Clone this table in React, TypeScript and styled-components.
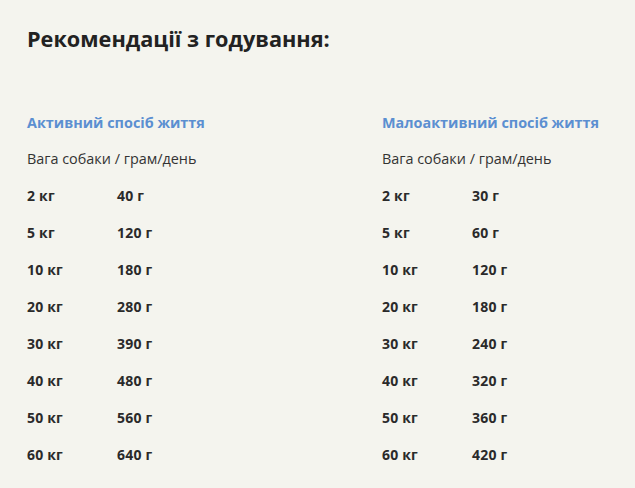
import React from "react";
import styled, { createGlobalStyle } from "styled-components";

const Global = createGlobalStyle`
  html, body { margin: 0; padding: 0; background: #f4f4ee; }
  body { font-family: "Open Sans", "Liberation Sans", sans-serif; color: #2a2a2a; }
`;

const Page = styled.div`
  padding: 25px 0 0 27px;
  width: 635px;
  box-sizing: border-box;
`;

const Title = styled.h2`
  margin: 0;
  font-size: 21.7px;
  font-weight: 700;
  line-height: 28px;
  color: #222;
`;

const Columns = styled.div`
  display: grid;
  grid-template-columns: 355px 1fr;
  margin-top: 60px;
`;

const Column = styled.div`
  display: flex;
  flex-direction: column;
`;

const Heading = styled.div`
  font-size: 14.4px;
  font-weight: 700;
  line-height: 20px;
  color: #5b8fd1;
`;

const Sub = styled.div`
  font-size: 14.4px;
  font-weight: 400;
  line-height: 20px;
  margin-top: 16px;
  color: #333;
`;

const Rows = styled.div`
  display: flex;
  flex-direction: column;
  gap: 17px;
  margin-top: 17px;
`;

const Row = styled.div`
  display: grid;
  grid-template-columns: 90px 1fr;
  font-size: 14px;
  font-weight: 700;
  line-height: 20px;
  letter-spacing: 0.2px;
  color: #2a2a2a;
`;

type Item = [string, string];

const active: Item[] = [
  ["2 кг", "40 г"],
  ["5 кг", "120 г"],
  ["10 кг", "180 г"],
  ["20 кг", "280 г"],
  ["30 кг", "390 г"],
  ["40 кг", "480 г"],
  ["50 кг", "560 г"],
  ["60 кг", "640 г"],
];

const low: Item[] = [
  ["2 кг", "30 г"],
  ["5 кг", "60 г"],
  ["10 кг", "120 г"],
  ["20 кг", "180 г"],
  ["30 кг", "240 г"],
  ["40 кг", "320 г"],
  ["50 кг", "360 г"],
  ["60 кг", "420 г"],
];

const Table = ({ title, items }: { title: string; items: Item[] }) => (
  <Column>
    <Heading>{title}</Heading>
    <Sub>Вага собаки / грам/день</Sub>
    <Rows>
      {items.map(([w, g]) => (
        <Row key={w}>
          <span>{w}</span>
          <span>{g}</span>
        </Row>
      ))}
    </Rows>
  </Column>
);

export default function App() {
  return (
    <>
      <Global />
      <Page>
        <Title>Рекомендації з годування:</Title>
        <Columns>
          <Table title="Активний спосіб життя" items={active} />
          <Table title="Малоактивний спосіб життя" items={low} />
        </Columns>
      </Page>
    </>
  );
}
